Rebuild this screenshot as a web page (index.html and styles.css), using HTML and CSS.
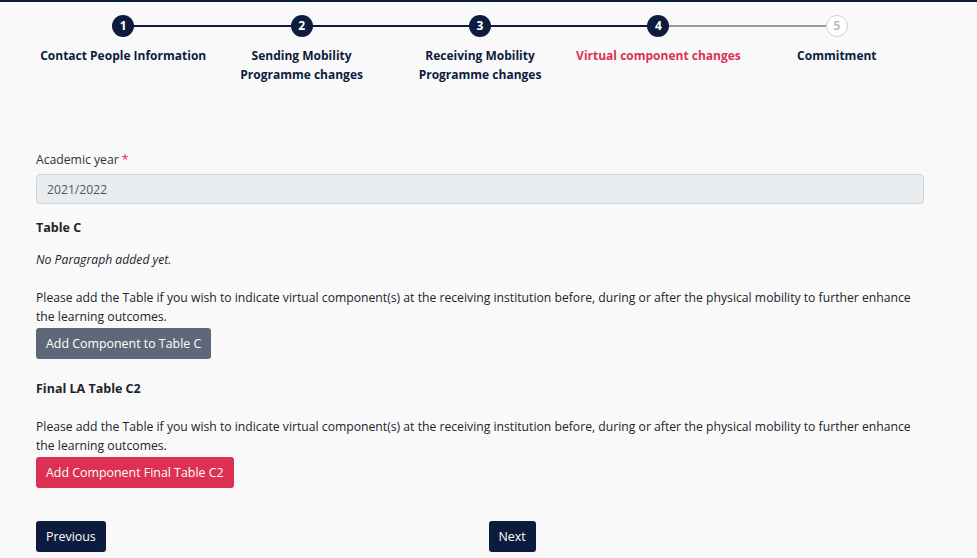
FILE: index.html
```html
<!DOCTYPE html>
<html lang="en">
<head>
  <meta charset="UTF-8" />
  <meta name="viewport" content="width=device-width, initial-scale=1.0"/>
  <title>Virtual component changes</title>
  <link rel="stylesheet" href="styles.css">
</head>
<body>
  <div class="page">
    <ol class="stepper">
      <li class="step done"><span class="dot">1</span><span class="name">Contact People Information</span></li>
      <li class="step done"><span class="dot">2</span><span class="name">Sending Mobility<br>Programme changes</span></li>
      <li class="step done"><span class="dot">3</span><span class="name">Receiving Mobility<br>Programme changes</span></li>
      <li class="step active"><span class="dot">4</span><span class="name">Virtual component changes</span></li>
      <li class="step todo"><span class="dot">5</span><span class="name">Commitment</span></li>
    </ol>

    <form class="form">
      <label class="field-label" for="year">Academic year <span class="req">*</span></label>
      <input type="text" id="year" class="field" value="2021/2022" disabled />

      <h4 class="section-title">Table C</h4>
      <p class="empty">No Paragraph added yet.</p>
      <p class="hint">Please add the Table if you wish to indicate virtual component(s) at the receiving institution before, during or after the physical mobility to further enhance the learning outcomes.</p>
      <button type="button" class="btn btn-grey">Add Component to Table C</button>

      <h4 class="section-title final">Final LA Table C2</h4>
      <p class="hint">Please add the Table if you wish to indicate virtual component(s) at the receiving institution before, during or after the physical mobility to further enhance the learning outcomes.</p>
      <button type="button" class="btn btn-red">Add Component Final Table C2</button>

      <div class="nav-row">
        <div class="nav-col"><button type="button" class="btn btn-dark">Previous</button></div>
        <div class="nav-col right"><button type="button" class="btn btn-dark">Next</button></div>
      </div>
    </form>
  </div>
</body>
</html>
```

FILE: styles.css
```css
body {
  margin: 0;
  background: #f9f9fa;
  font-family: "Open Sans", "Noto Sans", sans-serif;
  font-size: 12.2px;
  color: #212529;
  border-top: 2px solid #0d1b3e;
}

.page {
  padding: 0 53px 0 36px;
}

.stepper {
  display: flex;
  list-style: none;
  margin: 0 -2px;
  padding: 13px 0 0;
}

.step {
  flex: 1;
  display: flex;
  flex-direction: column;
  align-items: center;
  position: relative;
  text-align: center;
}

.step::before {
  content: "";
  position: absolute;
  top: 10px;
  left: -50%;
  right: 50%;
  height: 2px;
  background: #0d1b3e;
}

.step:first-child::before {
  display: none;
}

.step.todo::before {
  background: #9a9a9a;
}

.dot {
  position: relative;
  z-index: 1;
  width: 22px;
  height: 22px;
  border-radius: 50%;
  background: #0d1b3e;
  color: #fff;
  font-weight: bold;
  font-size: 12px;
  line-height: 22px;
  box-sizing: border-box;
}

.todo .dot {
  background: #fff;
  border: 1px solid #cfcfcf;
  color: #bdbdbd;
  line-height: 20px;
}

.name {
  margin-top: 9px;
  font-weight: bold;
  font-size: 12px;
  line-height: 19px;
  color: #0d1b3e;
}

.active .name {
  color: #dc3152;
}

.form {
  padding-top: 67px;
}

.field-label {
  display: block;
  line-height: 18px;
  color: #333;
}

.req {
  color: #dc3152;
}

.field {
  display: block;
  width: 100%;
  box-sizing: border-box;
  height: 30px;
  margin-top: 5px;
  padding: 0 10px;
  font: inherit;
  color: #555;
  background: #e9ecef;
  border: 1px solid #ced4da;
  border-radius: 4px;
}

.section-title {
  margin: 15px 0 0;
  font-size: 12.5px;
  line-height: 18px;
}

.section-title.final {
  margin-top: 21px;
}

.empty {
  font-style: italic;
  margin: 14px 0 0;
  line-height: 18px;
}

.hint {
  margin: 19px 0 0;
  line-height: 19px;
}

.btn {
  display: inline-block;
  height: 31px;
  padding: 0 10px;
  margin-top: 2px;
  font: inherit;
  font-size: 12.4px;
  color: #fff;
  border: none;
  border-radius: 3px;
  cursor: pointer;
}

.btn-grey {
  background: #5f6879;
}

.btn-red {
  background: #dc3152;
}

.btn-dark {
  background: #0d1b3e;
}

.nav-row {
  display: flex;
  margin-top: 33px;
}

.nav-col {
  flex: 1;
}

.nav-col.right {
  padding-left: 17px;
}

.nav-col .btn {
  margin-top: 0;
  padding: 0 10px;
}
```
